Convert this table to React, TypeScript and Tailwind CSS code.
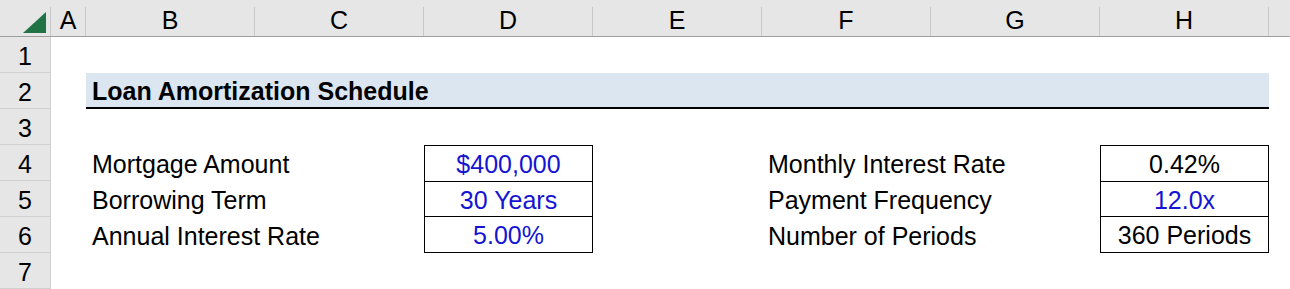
import React from 'react';

const COLS = ['A', 'B', 'C', 'D', 'E', 'F', 'G', 'H', ''];

const leftInputs = [
  { label: 'Mortgage Amount', value: '$400,000', blue: true },
  { label: 'Borrowing Term', value: '30 Years', blue: true },
  { label: 'Annual Interest Rate', value: '5.00%', blue: true },
];

const rightInputs = [
  { label: 'Monthly Interest Rate', value: '0.42%', blue: false },
  { label: 'Payment Frequency', value: '12.0x', blue: true },
  { label: 'Number of Periods', value: '360 Periods', blue: false },
];

// grid row 1 is the column header, so sheet row n sits on grid row n + 1
const rowStart = ['row-start-5', 'row-start-6', 'row-start-7'];

const App: React.FC = () => {
  return (
    <div
      className="w-[1290px] h-[289px] overflow-hidden bg-white text-black"
      style={{ fontFamily: '"Liberation Sans", Arial, sans-serif' }}
    >
      <div className="grid grid-cols-[51px_35px_169px_169px_169px_169px_169px_169px_169px_1fr] grid-rows-[37px_repeat(7,36px)] text-[25px] leading-none">
        {/* Corner */}
        <div className="col-start-1 row-start-1 bg-[#e6e6e6] border-b border-[#9e9e9e] pt-[7px]">
          <div className="h-full w-full border-r border-[#c8c8c8] flex items-end justify-end pr-[4px] pb-[3px]">
            <svg width="23" height="21" viewBox="0 0 23 21">
              <polygon points="23,0 23,21 0,21" fill="#217346" />
            </svg>
          </div>
        </div>

        {/* Column headers */}
        {COLS.map((c, i) => (
          <div key={c + i} className="row-start-1 bg-[#e6e6e6] border-b border-[#9e9e9e] pt-[7px]">
            <div className={`h-full flex items-center justify-center pb-[2px] ${c ? 'border-r border-[#c8c8c8]' : ''}`}>
              {c}
            </div>
          </div>
        ))}

        {/* Row headers */}
        {[1, 2, 3, 4, 5, 6, 7].map((n) => (
          <div
            key={n}
            className="col-start-1 bg-[#e6e6e6] border-r border-b border-[#d0d0d0] flex items-center justify-center pt-[3px]"
          >
            {n}
          </div>
        ))}

        {/* Title band */}
        <div className="col-start-3 col-end-10 row-start-3 bg-[#dce6f1] border-b-2 border-black flex items-center pl-[6px] pt-[2px] font-bold">
          Loan Amortization Schedule
        </div>

        {/* Left labels */}
        {leftInputs.map((r, i) => (
          <div key={r.label} className={`col-start-3 col-end-5 ${rowStart[i]} flex items-center pl-[6px] pt-[2px]`}>
            {r.label}
          </div>
        ))}

        {/* Left box */}
        <div className="col-start-5 row-start-5 row-end-8 border border-black flex flex-col divide-y divide-black">
          {leftInputs.map((r) => (
            <div key={r.value} className="flex-1 flex items-center justify-center pt-[2px] text-[#1414d2]">
              {r.value}
            </div>
          ))}
        </div>

        {/* Right labels */}
        {rightInputs.map((r, i) => (
          <div key={r.label} className={`col-start-7 col-end-9 ${rowStart[i]} flex items-center pl-[6px] pt-[2px]`}>
            {r.label}
          </div>
        ))}

        {/* Right box */}
        <div className="col-start-9 row-start-5 row-end-8 border border-black flex flex-col divide-y divide-black">
          {rightInputs.map((r) => (
            <div
              key={r.value}
              className={`flex-1 flex items-center justify-center pt-[2px] ${r.blue ? 'text-[#1414d2]' : 'text-black'}`}
            >
              {r.value}
            </div>
          ))}
        </div>
      </div>
    </div>
  );
};

export default App;
